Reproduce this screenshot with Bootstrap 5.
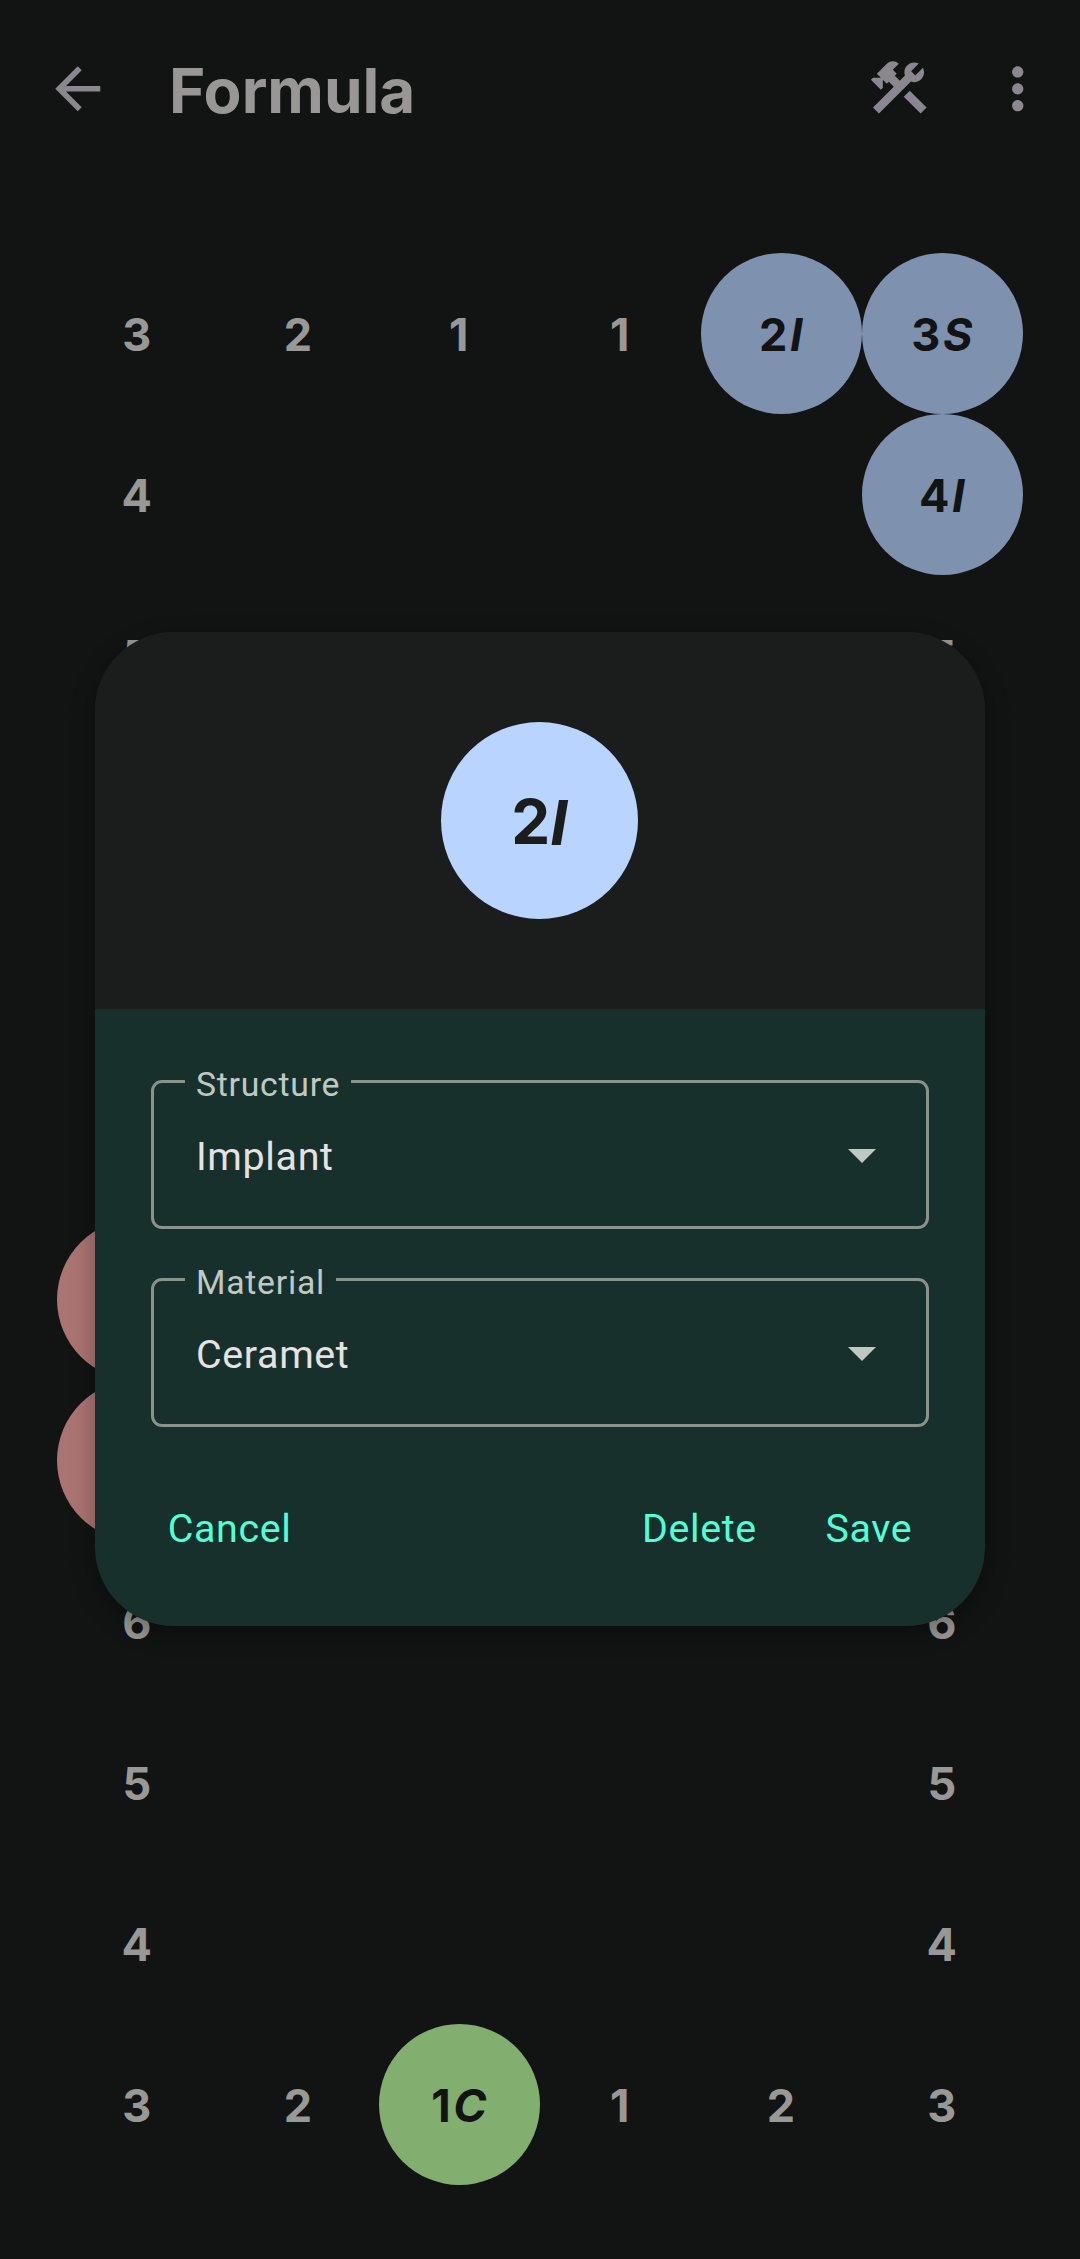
<!DOCTYPE html>
<html lang="en" data-bs-theme="dark">
<head>
<meta charset="utf-8">
<meta name="viewport" content="width=device-width, initial-scale=1">
<title>Formula</title>
<link href="https://cdn.jsdelivr.net/npm/bootstrap@5.3.0/dist/css/bootstrap.min.css" rel="stylesheet">
<style>
  body { background: #111413; font-family: Inter, sans-serif; }
  .screen { width: 1080px; height: 2259px; }
  .topbar { height: 176px; padding: 0 28.5px 0 43.5px; color: #8b878e; }
  .topbar svg { width: 67.5px; height: 67.5px; fill: currentColor; display: block; }
  .topbar h1 { font-size: 62px; line-height: 76px; font-weight: 700; color: #999696; margin: 6px 0 0 58px; }
  .topbar .back, .topbar .more { margin-top: 1.5px; }
  .topbar .more { margin-left: 51.5px; }
  .chart { padding: 77px 57px 0; }
  .tooth { width: 161px; height: 161px; padding-top: 3px; font-size: 45px; line-height: 54px; font-weight: 700; letter-spacing: 1.4px; color: #989896; }
  .tooth i { margin-left: 1.2px; }
  .tooth.blue { background: #7e91af; color: #111413; }
  .tooth.red { background: #aa7472; }
  .tooth.green { background: #82ae70; color: #111413; }
  .overlay { inset: 0 0 1px 0; }
  .dialog { width: 890px; height: 994px; border-radius: 79px; background: #18302c; box-shadow: 0 8px 24px rgba(0,0,0,.3); font-family: Roboto, sans-serif; }
  .preview { height: 377px; background: #1b1d1c; padding-right: 1px; }
  .preview-tooth { width: 197px; height: 197px; background: #b9d4ff; color: #1b1d1c; font: 700 61.875px/75px Inter, sans-serif; padding-top: 2px; }
  .preview-tooth i { padding-top: 2px; }
  .fields { padding: 71px 56px 0; gap: 49px; }
  .field { height: 149px; border: 3px solid #89938e; border-radius: 11px; padding: 3px 50px 0 42px; font-size: 39.4px; line-height: 46px; letter-spacing: .65px; color: #e6e1e5; }
  .field span { padding-top: 1px; }
  .field label { left: 31px; top: -18px; padding: 0 11px; background: #18302c; color: #bfc9c3; font-size: 33.75px; line-height: 40px; letter-spacing: .75px; }
  .caret { width: 28px; height: 14px; fill: #bfc9c3; }
  .actions { height: 199px; padding: 5px 39px 0; }
  .actions .btn { --bs-btn-padding-x: 33.75px; --bs-btn-color: #50ffd5; border: 0; font-size: 39.4px; line-height: 46px; letter-spacing: .65px; }
  .actions .delete { margin-right: 1px; }
</style>
<script src="https://cdn.jsdelivr.net/npm/bootstrap@5.3.0/dist/js/bootstrap.bundle.min.js"></script>
</head>
<body>
<div class="screen position-relative overflow-hidden">
  <header class="topbar d-flex align-items-center">
    <svg class="back" viewBox="0 0 24 24"><path d="M20 11H7.83l5.59-5.59L12 4l-8 8 8 8 1.41-1.41L7.83 13H20v-2z"/></svg>
    <h1>Formula</h1>
    <svg class="ms-auto" viewBox="0 0 24 24"><rect height="8.48" transform="matrix(0.7071 -0.7071 0.7071 0.7071 -6.8717 17.6255)" width="3" x="16.34" y="12.87"/><path d="M17.5,10c1.93,0,3.5-1.57,3.5-3.5c0-0.58-0.16-1.12-0.41-1.6l-2.7,2.7L16.4,6.11l2.7-2.7C18.62,3.16,18.08,3,17.5,3C15.57,3,14,4.57,14,6.5c0,0.41,0.08,0.8,0.21,1.16l-1.85,1.85l-1.78-1.78l0.71-0.71L9.88,5.61L12,3.49c-1.17-1.17-3.07-1.17-4.24,0L4.22,7.03l1.41,1.41H2.81L2.1,9.15l3.54,3.54l0.71-0.71V9.15l1.41,1.41l0.71-0.71l1.78,1.78l-7.41,7.41l2.12,2.12L16.34,9.79C16.7,9.92,17.09,10,17.5,10z"/></svg>
    <svg class="more" viewBox="0 0 24 24"><path d="M12 8c1.1 0 2-.9 2-2s-.9-2-2-2-2 .9-2 2 .9 2 2 2zm0 2c-1.1 0-2 .9-2 2s.9 2 2 2 2-.9 2-2-.9-2-2-2zm0 6c-1.1 0-2 .9-2 2s.9 2 2 2 2-.9 2-2-.9-2-2-2z"/></svg>
  </header>

  <main class="chart" id="chart"></main>

  <div class="overlay position-absolute d-flex align-items-center justify-content-center">
    <div class="dialog overflow-hidden" role="dialog">
      <div class="preview d-flex align-items-center justify-content-center">
        <div class="preview-tooth rounded-circle d-flex align-items-center justify-content-center"><span>2</span><i>I</i></div>
      </div>
      <div class="fields d-flex flex-column">
        <div class="field position-relative d-flex align-items-center justify-content-between"><label class="position-absolute">Structure</label><span>Implant</span><svg class="caret" viewBox="0 0 28 14"><path d="M0 0h28L14 14z"/></svg></div>
        <div class="field position-relative d-flex align-items-center justify-content-between"><label class="position-absolute">Material</label><span>Ceramet</span><svg class="caret" viewBox="0 0 28 14"><path d="M0 0h28L14 14z"/></svg></div>
      </div>
      <div class="actions d-flex align-items-center">
        <button class="btn me-auto">Cancel</button>
        <button class="btn delete">Delete</button>
        <button class="btn">Save</button>
      </div>
    </div>
  </div>
</div>
<script>
  // Each cell: tooth number, optional structure letter, optional colour ("-" leaves a part blank)
  const rows = [
    ['3', '2', '1', '1', '2 I blue', '3 S blue'],
    ['4', '', '', '', '', '4 I blue'],
    ['5', '', '', '', '', '5'],
    [], [], [],
    ['- - red'],
    ['- - red'],
    ['6', '', '', '', '', '6'],
    ['5', '', '', '', '', '5'],
    ['4', '', '', '', '', '4'],
    ['3', '2', '1 C green', '1', '2', '3']
  ];
  document.getElementById('chart').innerHTML = rows.map(row =>
    '<div class="d-flex">' + [0, 1, 2, 3, 4, 5].map(i => {
      const [num = '', mark = '', tone = ''] = (row[i] || '').split(' ');
      const text = num === '-' ? '' : num + (mark ? '<i>' + mark + '</i>' : '');
      return `<div class="tooth ${tone} rounded-circle d-flex align-items-center justify-content-center">${text}</div>`;
    }).join('') + '</div>').join('');
</script>
</body>
</html>
